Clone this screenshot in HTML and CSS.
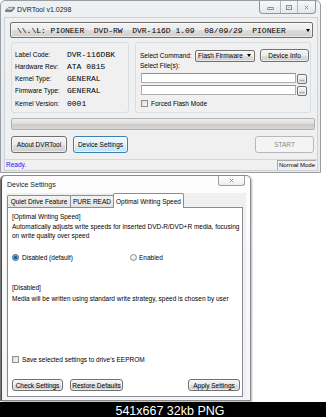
FILE: index.html
```html
<!DOCTYPE html>
<html lang="en">
<head>
    <meta charset="UTF-8">
    <meta name="viewport" content="width=device-width, initial-scale=1.0">
    <title>DVRTool v1.0298</title>
    <link rel="stylesheet" href="styles.css">
</head>
<body>

<div class="desk">

    <!-- Main DVRTool window -->
    <div class="window main-win">
        <div class="titlebar">
            <svg class="app-icon" viewBox="0 0 10 8">
                <path d="M0.6 4.2 L3.6 1.4 H9.4 L6.6 4.4 Z" fill="#d4d4d4" stroke="#5a5a5a" stroke-width="0.6"/>
                <path d="M0.6 4.2 V5.6 H6.6 V4.4 Z" fill="#8c8c8c" stroke="#5a5a5a" stroke-width="0.6"/>
                <path d="M6.6 4.4 L9.4 1.4 V2.8 L6.6 5.6 Z" fill="#a8a8a8" stroke="#5a5a5a" stroke-width="0.6"/>
            </svg>
            <span class="title">DVRTool v1.0298</span>
            <div class="caption-btns">
                <span class="cb min"><span class="min-glyph"></span></span>
                <span class="cb max"><span class="max-glyph"></span></span>
                <span class="cb close">
                    <svg viewBox="0 0 6 6" class="x-glyph"><path d="M1 1 L5 5 M5 1 L1 5" stroke="#8c8c8c" stroke-width="1.1"/></svg>
                </span>
            </div>
        </div>

        <div class="client">
            <div class="combo drive">
                <span class="mono">\\.\L: PIONEER  DVD-RW  DVR-116D 1.09  08/09/29  PIONEER</span>
                <span class="arrow"></span>
            </div>

            <div class="groups">
                <div class="group info">
                    <span class="lbl">Label Code:</span><span class="mono">DVR-116DBK</span>
                    <span class="lbl">Hardware Rev:</span><span class="mono">ATA 0815</span>
                    <span class="lbl">Kernel Type:</span><span class="mono">GENERAL</span>
                    <span class="lbl">Firmware Type:</span><span class="mono">GENERAL</span>
                    <span class="lbl">Kernel Version:</span><span class="mono">0001</span>
                </div>

                <div class="group cmd">
                    <div class="cmd-row">
                        <span class="cmd-label">Select Command:</span>
                        <div class="combo cmd-combo">
                            <span>Flash Firmware</span>
                            <span class="arrow"></span>
                        </div>
                        <div class="btn info-btn">Device Info</div>
                    </div>
                    <div class="files-label">Select File(s):</div>
                    <div class="file-row first">
                        <div class="field"></div>
                        <div class="btn browse">...</div>
                    </div>
                    <div class="file-row">
                        <div class="field"></div>
                        <div class="btn browse">...</div>
                    </div>
                    <div class="check">
                        <span class="box"></span>
                        <span>Forced Flash Mode</span>
                    </div>
                </div>
            </div>

            <div class="progress"></div>

            <div class="actions">
                <div class="btn about">About DVRTool</div>
                <div class="btn focus settings-btn">Device Settings</div>
                <div class="btn disabled start">START</div>
            </div>

            <div class="status">
                <span class="ready">Ready.</span>
                <span class="mode">Normal Mode</span>
            </div>
        </div>
    </div>

    <!-- Device Settings dialog -->
    <div class="window settings-win">
        <div class="titlebar">
            <span class="title dlg-title">Device Settings</span>
            <span class="dlg-close">
                <svg viewBox="0 0 6 6" class="x-glyph"><path d="M1 1 L5 5 M5 1 L1 5" stroke="#8c8c8c" stroke-width="1.1"/></svg>
            </span>
        </div>

        <div class="dlg-client">
            <div class="tabs">
                <div class="tab tab-quiet">Quiet Drive Feature</div>
                <div class="tab tab-pure">PURE READ</div>
                <div class="tab active tab-ows">Optimal Writing Speed</div>
            </div>

            <div class="panel">
                <p class="line heading">[Optimal Writing Speed]</p>
                <p class="line desc">Automatically adjusts write speeds for inserted DVD-R/DVD+R media, focusing<br>on write quality over speed</p>

                <div class="radios">
                    <div class="radio"><span class="dot on"></span>Disabled (default)</div>
                    <div class="radio"><span class="dot"></span>Enabled</div>
                </div>

                <p class="line state">[Disabled]</p>
                <p class="line note">Media will be written using standard write strategy, speed is chosen by user</p>

                <div class="check eeprom">
                    <span class="box"></span>
                    <span>Save selected settings to drive's EEPROM</span>
                </div>

                <div class="dlg-actions">
                    <div class="btn check-btn">Check Settings</div>
                    <div class="btn restore-btn">Restore Defaults</div>
                    <div class="btn apply-btn">Apply Settings</div>
                </div>
            </div>
        </div>
    </div>

</div>

<div class="caption">541x667 32kb PNG</div>

</body>
</html>
```

FILE: styles.css
```css
* {
    box-sizing: border-box;
}

body {
    margin: 0;
    width: 326px;
    height: 417px;
    overflow: hidden;
    background-color: #fff;
    font-family: "Liberation Sans", Arial, sans-serif;
    font-size: 6.5px;
    color: #000;
}

.desk {
    position: relative;
    height: 402px;
    background-color: #fff;
}

/* windows sit on the desktop at their own place */
.window {
    position: absolute;
    display: flex;
    flex-direction: column;
}

.main-win {
    left: 0;
    top: 0;
    width: 321px;
    height: 173px;
    border: 1px solid #9a9ea3;
    border-radius: 5px 5px 0 0;
    background: linear-gradient(#eef1f4, #e6eaee);
    padding: 0 3px 2px 4px;
}

.titlebar {
    display: flex;
    align-items: center;
    height: 17px;
    flex: none;
}

.app-icon {
    width: 10px;
    height: 8px;
    margin-right: 2px;
}

.title {
    font-size: 7px;
    color: #1a1a1a;
}

.caption-btns {
    display: flex;
    align-self: flex-start;
    margin-left: auto;
    margin-right: 1px;
    height: 13px;
    border: 1px solid #8d949b;
    border-top: none;
    border-radius: 0 0 4px 4px;
    background: linear-gradient(#f7f8fa, #e4e8ec);
    overflow: hidden;
}

.cb {
    display: flex;
    align-items: center;
    justify-content: center;
}

.cb + .cb {
    border-left: 1px solid #b3b8be;
}

.cb.min {
    width: 20px;
}

.cb.max {
    width: 17px;
}

.cb.close {
    width: 18px;
}

.min-glyph {
    width: 7px;
    height: 3px;
    margin-top: 3px;
    border: 1px solid #8c8c8c;
    border-radius: 1px;
}

.max-glyph {
    width: 6px;
    height: 5px;
    border: 1px solid #8c8c8c;
    box-shadow: inset 0 0 0 1px #e9ecef, inset 0 0 0 2px #b9b9b9;
}

.x-glyph {
    width: 5px;
    height: 5px;
}

.client {
    flex: 1;
    display: flex;
    flex-direction: column;
    background-color: #f0f0f0;
    box-shadow: 0 0 0 1px #cdd2d7;
}

/* combo boxes and buttons share the Vista button face */
.combo,
.btn {
    display: flex;
    align-items: center;
    border: 1px solid #707070;
    border-radius: 2px;
    background: linear-gradient(#f3f3f3 0%, #ebebeb 50%, #dddddd 51%, #cfcfcf 100%);
    box-shadow: inset 0 0 0 1px rgba(255, 255, 255, 0.55);
}

.btn {
    justify-content: center;
    border-radius: 3px;
    white-space: nowrap;
}

.btn.focus {
    border-color: #3c7fb1;
    background: linear-gradient(#eef8fe 0%, #e2f3fd 50%, #cdecfd 51%, #bfe4f8 100%);
    box-shadow: inset 0 0 0 1px rgba(255, 255, 255, 0.7);
}

.btn.disabled {
    border-color: #b5b9bc;
    background: #f4f4f4;
    color: #8a8a8a;
    box-shadow: none;
}

.arrow {
    margin-left: auto;
    width: 0;
    height: 0;
    border-left: 2px solid transparent;
    border-right: 2px solid transparent;
    border-top: 3px solid #000;
}

.mono {
    font-family: "Liberation Mono", "Courier New", monospace;
    font-size: 8px;
    white-space: pre;
}

.drive {
    height: 16px;
    margin: 4px 4px 0 5px;
    padding-left: 6px;
    flex: none;
}

.drive .arrow {
    margin-right: 2px;
}

.groups {
    display: flex;
    gap: 6px;
    height: 71px;
    margin: 4px 0 0 6px;
    flex: none;
}

.group {
    border: 1px solid #d5dfe5;
    border-radius: 3px;
}

.info {
    width: 118px;
    padding: 5px 0 0 3px;
    display: grid;
    grid-template-columns: 52px auto;
    grid-auto-rows: 12.25px;
    align-items: center;
    align-content: start;
}

.cmd {
    width: 176px;
    padding: 6px 1px 0 4px;
}

.cmd-row {
    display: flex;
    align-items: center;
    height: 13px;
}

.cmd-label {
    width: 55px;
}

.cmd-combo {
    width: 60px;
    height: 12px;
    padding-left: 2px;
}

.cmd-combo .arrow {
    margin-right: 3px;
}

.info-btn {
    width: 49px;
    height: 13px;
    margin-left: 5px;
}

.files-label {
    height: 8px;
    line-height: 8px;
}

.file-row {
    display: flex;
    align-items: flex-start;
    height: 11px;
    margin: 1px 0 0 1px;
}

.file-row.first {
    margin-top: 3px;
}

.field {
    width: 155px;
    height: 10px;
    background-color: #fff;
    border: 1px solid #abadb3;
    border-top-color: #8e9197;
}

.browse {
    width: 10px;
    height: 10px;
    margin: 1px 0 0 1px;
    align-items: flex-end;
    font-size: 5.5px;
    line-height: 6px;
    padding-bottom: 1px;
    border-radius: 2px;
}

.check {
    display: flex;
    align-items: center;
    height: 8px;
    margin: 3px 0 0 1px;
}

.box {
    width: 7px;
    height: 7px;
    margin-right: 3px;
    border: 1px solid #8f8f8f;
    background: linear-gradient(135deg, #d8d8d8, #fbfbfb);
}

.progress {
    height: 12px;
    margin: 5px 2px 0 6px;
    border: 1px solid #b2b2b2;
    border-radius: 2px;
    background: linear-gradient(#eeeeee, #dddddd 45%, #cbcbcb 55%, #d6d6d6);
    flex: none;
}

.actions {
    display: flex;
    gap: 6px;
    height: 17px;
    margin: 6px 3px 0 6px;
    flex: none;
}

.about {
    width: 56px;
}

.settings-btn {
    width: 55px;
}

.start {
    width: 59px;
    margin-left: auto;
}

.status {
    display: flex;
    height: 11px;
    margin-top: 6px;
    border-top: 1px solid #d6d6d6;
    line-height: 10px;
    flex: none;
}

.ready {
    color: #1515ff;
    padding-left: 1px;
}

.mode {
    margin: 0 1px 0 auto;
    width: 39px;
    padding-left: 1px;
    border-left: 1px solid #a8a8a8;
    border-top: 1px solid #a8a8a8;
    font-size: 6px;
    line-height: 9px;
    white-space: nowrap;
}

/* Device Settings dialog */
.settings-win {
    left: 1px;
    top: 175px;
    width: 250px;
    height: 226px;
    border: 1px solid #8b8b8b;
    border-left-color: #4a4a4a;
    border-radius: 5px 5px 0 0;
    background: linear-gradient(#fdfdfe, #f3f5f7);
    padding: 0 4px 3px 4px;
    box-shadow: 1px 1px 2px rgba(0, 0, 0, 0.3), -1px 0 0 #777;
}

.dlg-title {
    margin-left: 1px;
}

.dlg-close {
    display: flex;
    align-items: center;
    justify-content: center;
    align-self: flex-start;
    width: 27px;
    height: 10px;
    margin: 0 1px 0 auto;
    border: 1px solid #9aa0a6;
    border-top: none;
    border-radius: 0 0 3px 3px;
    background: linear-gradient(#ffffff, #eceff2);
}

.dlg-client {
    flex: 1;
    display: flex;
    flex-direction: column;
    padding: 0 3px 0 1px;
    background-color: #f0f0f0;
}

.tabs {
    display: flex;
    align-items: flex-end;
    height: 14px;
    flex: none;
}

.tab {
    display: flex;
    align-items: center;
    justify-content: center;
    height: 12px;
    margin-right: -1px;
    border: 1px solid #898c95;
    border-bottom: none;
    border-radius: 2px 2px 0 0;
    background: linear-gradient(#f4f4f4, #e2e2e2);
    white-space: nowrap;
}

.tab-quiet {
    width: 64px;
}

.tab-pure {
    width: 44px;
}

.tab-ows {
    width: 71px;
}

.tab.active {
    position: relative;
    z-index: 1;
    height: 15px;
    margin-bottom: -1px;
    background: #fff;
}

.panel {
    flex: 1;
    display: flex;
    flex-direction: column;
    padding: 0 2px 0 4px;
    border: 1px solid #898c95;
    background-color: #fff;
}

.line {
    margin: 0;
    line-height: 8px;
    white-space: nowrap;
}

.heading {
    margin-top: 5px;
}

.desc {
    margin-top: 2px;
    line-height: 8.5px;
}

.radios {
    display: grid;
    grid-template-columns: 118px auto;
    height: 8px;
    margin-top: 13px;
}

.radio {
    display: flex;
    align-items: center;
}

.dot {
    width: 7px;
    height: 7px;
    margin-right: 3px;
    border-radius: 50%;
    border: 1px solid #8f8f8f;
    background: radial-gradient(circle at 40% 40%, #ffffff, #d4d4d4);
}

.radio + .radio .dot {
    margin-right: 2px;
}

.dot.on {
    border-color: #2c628b;
    background: radial-gradient(circle, #1b5283 0, #2a6fa6 1.6px, #9ccbe9 2.4px, #e8f3fb 3px);
}

.state {
    margin-top: 23px;
}

.note {
    margin-top: 3px;
}

.eeprom {
    margin: 52px 0 0 0;
}

.dlg-actions {
    display: flex;
    height: 12px;
    margin-top: 16px;
}

.check-btn {
    width: 51px;
}

.restore-btn {
    width: 53px;
    margin-left: 7px;
}

.apply-btn {
    width: 52px;
    margin-left: auto;
}

.caption {
    height: 15px;
    padding: 2px 0 0 14px;
    background-color: #000;
    color: #fff;
    font-family: "Liberation Sans", Arial, sans-serif;
    font-size: 12.5px;
    line-height: 15px;
    text-align: center;
    white-space: nowrap;
    overflow: hidden;
}
```
